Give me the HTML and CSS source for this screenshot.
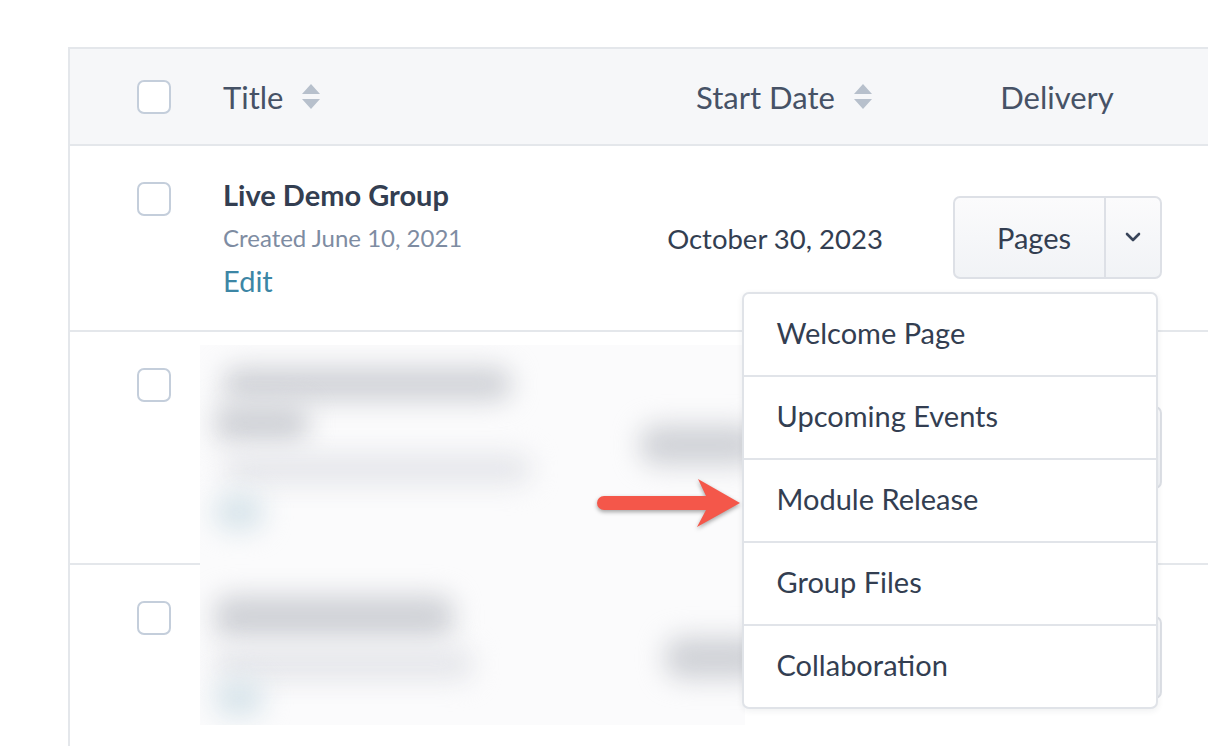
FILE: index.html
```html
<!DOCTYPE html>
<html lang="en">
<head>
  <meta charset="UTF-8">
  <meta name="viewport" content="width=device-width, initial-scale=1.0">
  <link rel="stylesheet" href="styles.css">
  <title>Groups</title>
</head>
<body>

  <div class="page">
    <div class="table">

      <div class="row head">
        <div class="cell check"><span class="box"></span></div>
        <div class="cell title">
          Title
          <svg class="sort" width="20" height="27" viewBox="0 0 20 27"><path d="M10 1 L19 11 L1 11 Z M1 16 L19 16 L10 26 Z"/></svg>
        </div>
        <div class="cell date head-date">
          Start Date
          <svg class="sort" width="20" height="27" viewBox="0 0 20 27"><path d="M10 1 L19 11 L1 11 Z M1 16 L19 16 L10 26 Z"/></svg>
        </div>
        <div class="cell delivery">Delivery</div>
      </div>

      <div class="row item">
        <div class="cell check"><span class="box"></span></div>
        <div class="cell title">
          <div class="name">Live Demo Group</div>
          <div class="created">Created June 10, 2021</div>
          <a class="edit" href="#">Edit</a>
        </div>
        <div class="cell date">October 30, 2023</div>
        <div class="cell delivery">
          <div class="split-wrap">
            <div class="split">
              <span class="split-main">Pages</span>
              <span class="split-caret">
                <svg width="16" height="10" viewBox="0 0 16 10"><path d="M2 2 L8 8 L14 2"/></svg>
              </span>
            </div>
            <ul class="menu">
              <li>Welcome Page</li>
              <li>Upcoming Events</li>
              <li>Module Release</li>
              <li>Group Files</li>
              <li>Collaboration</li>
            </ul>
          </div>
        </div>
      </div>

      <div class="row item tall">
        <div class="cell check"><span class="box"></span></div>
        <div class="cell title"></div>
        <div class="cell date"></div>
        <div class="cell delivery">
          <div class="split">
            <span class="split-main">Pages</span>
            <span class="split-caret"></span>
          </div>
        </div>
      </div>

      <div class="row item">
        <div class="cell check"><span class="box"></span></div>
        <div class="cell title"></div>
        <div class="cell date"></div>
        <div class="cell delivery">
          <div class="split">
            <span class="split-main">Pages</span>
            <span class="split-caret"></span>
          </div>
        </div>
      </div>

      <!-- redacted rows -->
      <div class="redact">
        <span class="blob b1"></span>
        <span class="blob b2"></span>
        <span class="blob light b3"></span>
        <span class="blob blue b4"></span>
        <span class="blob b5"></span>
        <span class="blob b6"></span>
        <span class="blob light b7"></span>
        <span class="blob blue b8"></span>
        <span class="blob b9"></span>
      </div>

      <svg class="arrow" width="160" height="70" viewBox="0 0 160 70">
        <path d="M14 26 L116 26 L108 9 L150 33 L107 57 L116 40 L14 40 A7 7 0 0 1 14 26 Z"/>
      </svg>

    </div>
  </div>

</body>
</html>
```

FILE: styles.css
```css
body {
  margin: 0;
  font-family: Lato, "Open Sans", sans-serif;
  color: #333e51;
  background-color: #fff;
  overflow: hidden;
}

.page {
  padding: 47px 0 0 68px;
}

.table {
  position: relative;
  width: 1160px;
  border-top: 2px solid #e4e7eb;
  border-left: 2px solid #e4e7eb;
}

.row {
  display: grid;
  grid-template-columns: 153px 420px 264px 300px;
  border-bottom: 2px solid #e4e7eb;
}

.head {
  height: 95px;
  align-items: center;
  background-color: #f6f7f9;
  font-size: 31px;
  color: #465266;
}

.item {
  height: 184px;
}

.item.tall {
  height: 231px;
}

.cell {
  display: flex;
  align-items: center;
}

.check {
  padding-left: 67px;
}

.item .check {
  align-items: flex-start;
  padding-top: 36px;
}

.box {
  display: block;
  width: 34px;
  height: 34px;
  box-sizing: border-box;
  border: 2px solid #c4cedb;
  border-radius: 7px;
  background-color: #fff;
}

.sort {
  margin-left: 18px;
  fill: #b7c0cc;
}

.item .title {
  flex-direction: column;
  align-items: flex-start;
  padding-top: 28px;
}

.name {
  font-size: 29px;
  font-weight: 700;
  line-height: 42px;
  color: #333e51;
}

.created {
  font-size: 24px;
  line-height: 44px;
  color: #7e8ca2;
}

.edit {
  font-size: 29px;
  line-height: 42px;
  color: #3c86a5;
  text-decoration: none;
}

.date {
  justify-content: center;
  font-size: 27.5px;
}

.head-date {
  padding-left: 19px;
  font-size: 31px;
}

.delivery {
  justify-content: center;
}

.split-wrap {
  position: relative;
  top: -1px;
}

.split {
  display: flex;
  height: 83px;
  box-sizing: border-box;
  border: 2px solid #dde0e6;
  border-radius: 7px;
  background: linear-gradient(#fbfbfc, #f1f3f6);
  font-size: 29px;
}

.split-main {
  width: 149px;
  display: flex;
  align-items: center;
  justify-content: center;
  padding-left: 10px;
  box-sizing: border-box;
}

.split-caret {
  width: 54px;
  display: flex;
  align-items: center;
  justify-content: center;
  border-left: 2px solid #dde0e6;
}

.split-caret svg {
  fill: none;
  stroke: #39455a;
  stroke-width: 2.6;
  stroke-linecap: round;
  stroke-linejoin: round;
}

.menu {
  position: absolute;
  top: 96px;
  right: 4px;
  z-index: 3;
  width: 416px;
  margin: 0;
  padding: 0;
  list-style: none;
  box-sizing: border-box;
  border: 2px solid #e0e3e8;
  border-radius: 7px;
  background-color: #fff;
  box-shadow: 0 2px 6px rgba(30, 40, 60, 0.07);
}

.menu li {
  height: 81px;
  line-height: 77px;
  padding-left: 33px;
  font-size: 29px;
  border-top: 2px solid #e1e4e9;
}

.menu li:first-child {
  border-top: none;
}

.redact {
  position: absolute;
  left: 130px;
  top: 296px;
  width: 545px;
  height: 380px;
  z-index: 2;
  overflow: hidden;
  background-color: #fbfbfc;
}

.blob {
  position: absolute;
  border-radius: 16px;
  background-color: #d0d2d7;
  filter: blur(13px);
}

.blob.light {
  background-color: #e6e7eb;
}

.blob.blue {
  background-color: #d9e5eb;
}

.b1 { left: 22px; top: 22px; width: 290px; height: 34px; }
.b2 { left: 14px; top: 58px; width: 95px; height: 40px; }
.b3 { left: 22px; top: 108px; width: 310px; height: 32px; }
.b4 { left: 14px; top: 148px; width: 50px; height: 38px; }
.b5 { left: 440px; top: 80px; width: 120px; height: 40px; }
.b6 { left: 14px; top: 250px; width: 240px; height: 44px; }
.b7 { left: 14px; top: 302px; width: 260px; height: 34px; }
.b8 { left: 14px; top: 334px; width: 50px; height: 38px; }
.b9 { left: 465px; top: 292px; width: 100px; height: 42px; }

.arrow {
  position: absolute;
  left: 520px;
  top: 421px;
  z-index: 4;
  fill: #f4574a;
  filter: drop-shadow(0 2px 2px rgba(0, 0, 0, 0.35));
}
```
